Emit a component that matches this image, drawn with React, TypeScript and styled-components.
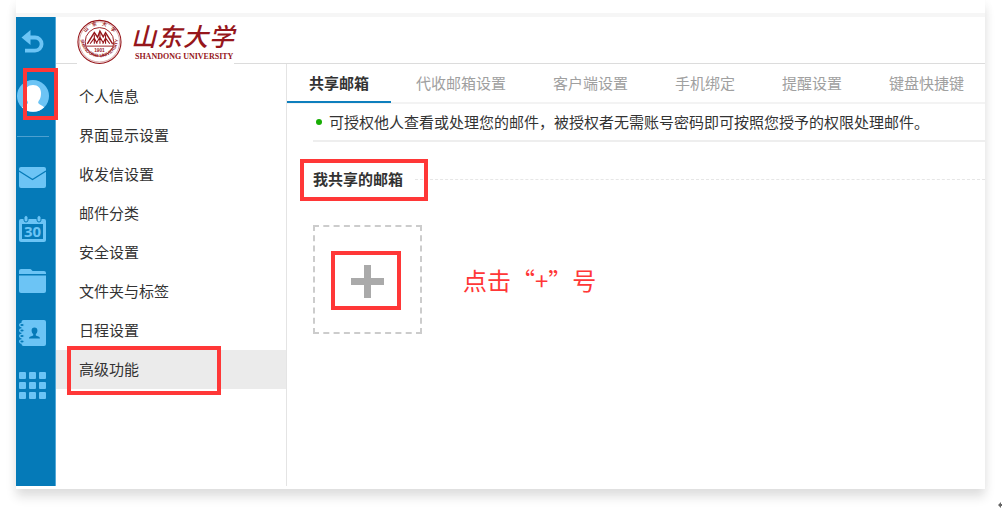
import React from "react";
import styled, { createGlobalStyle } from "styled-components";

const BLUE = "#057ab8";
const SKY = "#6cc4f5";
const RED = "#ff3737";
const MAROON = "#96161b";

const GlobalStyle = createGlobalStyle`
  *, *::before, *::after { box-sizing: border-box; }
  body {
    margin: 0;
    background: #fff;
    color: #333;
    font: 15px/20px "Noto Sans CJK SC", "Noto Sans", sans-serif;
  }
  button { padding: 0; border: 0; background: none; font: inherit; color: inherit; cursor: pointer; }
  ul, p, h2 { margin: 0; padding: 0; list-style: none; }
  svg { display: block; }
`;

const Page = styled.div`
  display: flex;
  flex-direction: column;
  min-height: 100vh;
`;

const Card = styled.div`
  flex: 1;
  display: flex;
  flex-direction: column;
  margin: 0 17px 0 16px;
  padding: 13px 0 3px;
  background: #fff;
  box-shadow: 0 8px 10px rgba(0, 0, 0, 0.12), 0 0 12px rgba(0, 0, 0, 0.03);
`;

const Strip = styled.div`
  height: 4px;
  background: #f6f6f6;
`;

const Shell = styled.div`
  flex: 1;
  display: flex;
`;

const Rail = styled.nav`
  display: flex;
  flex-direction: column;
  flex: none;
  width: 40px;
  padding-right: 6px;
  background: ${BLUE};
  border-right: 1px solid #55a9d8;
`;

const RailButton = styled.button<{ $height?: number }>`
  display: flex;
  align-items: center;
  justify-content: center;
  height: ${(p) => p.$height ?? 52}px;
`;

const RailDivider = styled.hr`
  width: 32px;
  margin: 8px 0 14px 1px;
  border: 0;
  border-top: 1px solid #4da0d0;
`;

const Avatar = styled.span`
  position: relative;
  display: block;
`;

const Marker = styled.span<{ $inset: string }>`
  position: absolute;
  z-index: 1;
  inset: ${(p) => p.$inset};
  border: 4px solid ${RED};
  pointer-events: none;
`;

const Workspace = styled.div`
  flex: 1;
  min-width: 0;
  display: flex;
  flex-direction: column;
`;

const Header = styled.header`
  height: 47px;
  padding-left: 21px;
  border-bottom: 1px solid #dcdcdc;
`;

const Brand = styled.a`
  display: flex;
  align-items: center;
  gap: 9px;
  width: 157px;
  height: 47px;
  background: #fff;
  color: ${MAROON};
  text-decoration: none;
`;

const BrandNames = styled.span`
  display: flex;
  flex-direction: column;
`;

const BrandChinese = styled.span`
  display: flex;
  gap: 1px;
  font-size: 25px;
  line-height: 33px;
  font-style: italic;
  font-weight: 500;
`;

const BrandLatin = styled.span`
  padding-left: 4px;
  font: 8px/10px "Liberation Serif", serif;
  font-weight: 700;
  white-space: nowrap;
`;

const Columns = styled.div`
  flex: 1;
  display: flex;
`;

const Menu = styled.ul`
  flex: none;
  width: 231px;
  && { padding-top: 13px; }
  border-right: 1px solid #e4e4e4;
`;

const MenuItem = styled.li`
  position: relative;
`;

const MenuLink = styled.a<{ $active?: boolean }>`
  display: flex;
  align-items: center;
  height: 39px;
  padding: 0 23px 1px;
  background: ${(p) => (p.$active ? "#ebebeb" : "transparent")};
  color: #333;
  text-decoration: none;
`;

const Content = styled.main`
  flex: 1;
  min-width: 0;
`;

const Tabs = styled.div`
  display: flex;
  gap: 3px;
  height: 40px;
  border-bottom: 2px solid #f3f3f3;
`;

const Tab = styled.button<{ $active?: boolean }>`
  height: 39px;
  padding: 0 22px;
  border-bottom: 2px solid ${(p) => (p.$active ? "#0e7fbd" : "transparent")};
  color: ${(p) => (p.$active ? "#333" : "#a0a0a0")};
  font-weight: ${(p) => (p.$active ? 700 : 400)};
  white-space: nowrap;
`;

const Panel = styled.div`
  padding-left: 26px;
`;

const Notice = styled.p`
  display: flex;
  align-items: center;
  gap: 7px;
  height: 38px;
  && { padding-left: 3px; }
  border-bottom: 2px solid #eee;

  &::before {
    content: "";
    flex: none;
    width: 6px;
    height: 6px;
    border-radius: 50%;
    background: #18ad04;
  }
`;

const SectionHead = styled.div`
  display: flex;
  align-items: center;
  gap: 12px;
  height: 74px;

  &::after {
    content: "";
    flex: 1;
    border-top: 1px dashed #e6e6e6;
  }
`;

const SectionTitle = styled.h2`
  position: relative;
  font-size: 15px;
  line-height: 20px;
`;

const ShareRow = styled.div`
  display: flex;
  align-items: center;
  gap: 41px;
  margin-top: 9px;
`;

const AddButton = styled.button`
  position: relative;
  display: flex;
  align-items: center;
  justify-content: center;
  width: 109px;
  height: 109px;
  && { padding-top: 4px; }
  border: 2px dashed #ccc;
`;

const Hint = styled.p`
  color: ${RED};
  font-size: 24px;
  line-height: 32px;
`;

const Footer = styled.footer`
  display: flex;
  justify-content: flex-end;
  align-items: flex-end;
  height: 20px;
`;

const BackIcon = () => (
  <svg width="23" height="24" viewBox="0 0 23 24" fill="none">
    <path d="M0.500 8.500L9.500 1v15z" fill={SKY} />
    <path d="M8 8.500h6a6.600 6.600 0 0 1 0 13.200H4" stroke={SKY} strokeWidth="3.800" />
  </svg>
);

const AvatarIcon = () => (
  <svg width="33" height="32" viewBox="0 0 33 32">
    <circle cx="17" cy="16" r="16" fill={SKY} />
    <path
      d="M17 5c5 0 8 3.200 8 8 0 2.600-.4 4.500-1.200 6.200-.6 1.300-1.800 2.200-1.600 3.500.3 1.700 3.400 2.300 6 4.500A16 16 0 0 1 6 27.500c2.400-2.200 5.600-3 5.900-4.800.2-1.300-1-2.200-1.700-3.500C9.400 17.500 9 15.600 9 13c0-4.800 3-8 8-8z"
      fill="#fff"
    />
  </svg>
);

const MailIcon = () => (
  <svg width="27" height="21" viewBox="0 0 27 21">
    <rect width="27" height="21" rx="2" fill={SKY} />
    <path d="M0 4l13.500 8.500L27 4" fill="none" stroke={BLUE} strokeWidth="1.200" />
  </svg>
);

const CalendarIcon = () => (
  <svg width="27" height="28" viewBox="0 0 27 28">
    <rect y="4" width="27" height="23" rx="2" fill={SKY} />
    <rect x="3" y="9" width="21" height="15" fill={BLUE} />
    {[5, 18].map((x) => (
      <rect key={x} x={x} y="0.500" width="4" height="6.500" rx="2" fill={SKY} stroke={BLUE} />
    ))}
    <text
      x="13.500"
      y="22"
      textAnchor="middle"
      fontFamily="Open Sans, sans-serif"
      fontSize="15"
      fontWeight="700"
      fill={SKY}
    >
      30
    </text>
  </svg>
);

const FolderIcon = () => (
  <svg width="27" height="25" viewBox="0 0 27 25" fill={SKY}>
    <path d="M0 5V2a2 2 0 0 1 2-2h9c1.500 0 1.800 2 3 2h11a2 2 0 0 1 2 2v1z" />
    <path d="M0 6.500h27V22a2 2 0 0 1-2 2H2a2 2 0 0 1-2-2z" />
  </svg>
);

const ContactsIcon = () => (
  <svg width="27" height="26" viewBox="0 0 27 26">
    <rect x="2.500" width="24.500" height="26" rx="2" fill={SKY} />
    {[5, 10.5, 16, 21.5].map((y) => (
      <ellipse key={y} cx="3" cy={y} rx="2.300" ry="1.700" fill={BLUE} stroke={SKY} strokeWidth="1.300" />
    ))}
    <path
      d="M15.500 7.500c1.900 0 2.900 1.300 2.900 3.100 0 1.700-.8 2.800-1.600 3.500v1.300c1.400.7 4.200.9 4.200 3.100H10c0-2.200 2.800-2.400 4.200-3.100v-1.300c-.8-.7-1.600-1.800-1.600-3.500 0-1.800 1-3.100 2.900-3.100z"
      fill={BLUE}
    />
  </svg>
);

const AppsIcon = () => (
  <svg width="27" height="27" viewBox="0 0 27 27" fill={SKY}>
    {[0, 10, 20].map((y) =>
      [0, 10, 20].map((x) => <rect key={`${x}-${y}`} x={x} y={y} width="7" height="7" rx="1" />)
    )}
  </svg>
);

const Seal = () => (
  <svg width="48" height="47" viewBox="0 0 48 47" fill="none" stroke={MAROON}>
    <circle cx="24" cy="25" r="23" strokeWidth="1.200" />
    <circle cx="24" cy="25" r="21.500" strokeWidth="0.400" />
    <circle cx="24" cy="25" r="15.300" strokeWidth="1" />
    <path d="M11 27L18.500 15l3.500 5L24.500 13.500l3.500 6L30.500 15 38 27" strokeWidth="1.500" />
    <path
      d="M14 27l4.500-6 3 6M21 26l3.500-6 3.500 6M27.500 27l3-6L35 27M18.500 17v10M24.500 15v12M30.500 17v10"
      strokeWidth="1.200"
    />
    <path d="M10 29.500h28" strokeWidth="1" />
    <path id="sealBottom" d="M4 24A20.200 20.200 0 0 0 44 24" stroke="none" />
    <path id="sealTop" d="M6.500 21A18 18 0 0 1 41.500 21" stroke="none" />
    <g fill={MAROON} stroke="none" fontWeight="700">
      <text x="24" y="36" textAnchor="middle" fontFamily="Liberation Sans, sans-serif" fontSize="5">
        1901
      </text>
      <text fontFamily="Liberation Sans, sans-serif" fontSize="5">
        <textPath href="#sealBottom" startOffset="50%" textAnchor="middle">
          SHANDONG UNIVERSITY
        </textPath>
      </text>
      <text fontFamily="Noto Sans CJK SC, sans-serif" fontSize="5">
        <textPath href="#sealTop" startOffset="50%" textAnchor="middle">
          山　东　大　学
        </textPath>
      </text>
    </g>
  </svg>
);

const PlusIcon = () => (
  <svg width="33" height="33" viewBox="0 0 33 33">
    <path d="M16.500 0v33M0 16.500h33" stroke="#aaa" strokeWidth="7" />
  </svg>
);

const ReturnMark = () => (
  <svg width="4" height="8" viewBox="0 0 4 8">
    <path d="M0 4l3-3v2h1v2H3v2z" fill="#666" />
  </svg>
);

const apps = [
  { label: "邮件", Icon: MailIcon },
  { label: "日历", Icon: CalendarIcon },
  { label: "文件", Icon: FolderIcon },
  { label: "通讯录", Icon: ContactsIcon },
  { label: "更多应用", Icon: AppsIcon },
];

const menu = ["个人信息", "界面显示设置", "收发信设置", "邮件分类", "安全设置", "文件夹与标签", "日程设置", "高级功能"];
const activeMenu = "高级功能";

const tabs = ["共享邮箱", "代收邮箱设置", "客户端设置", "手机绑定", "提醒设置", "键盘快捷键"];
const activeTab = "共享邮箱";

export default function App() {
  return (
    <Page lang="zh-CN">
      <GlobalStyle />
      <Card>
        <Strip />
        <Shell>
          <Rail>
            <RailButton $height={47} aria-label="返回">
              <BackIcon />
            </RailButton>
            <RailButton $height={64} aria-label="个人资料">
              <Avatar>
                <AvatarIcon />
                <Marker $inset="-12px -9px -8px 7px" />
              </Avatar>
            </RailButton>
            <RailDivider />
            {apps.map(({ label, Icon }) => (
              <RailButton key={label} aria-label={label}>
                <Icon />
              </RailButton>
            ))}
          </Rail>
          <Workspace>
            <Header>
              <Brand href="#home">
                <Seal />
                <BrandNames>
                  <BrandChinese>
                    {["山", "东", "大", "学"].map((c) => (
                      <span key={c}>{c}</span>
                    ))}
                  </BrandChinese>
                  <BrandLatin>SHANDONG UNIVERSITY</BrandLatin>
                </BrandNames>
              </Brand>
            </Header>
            <Columns>
              <Menu>
                {menu.map((name) => (
                  <MenuItem key={name}>
                    <MenuLink href="#settings" $active={name === activeMenu}>
                      {name}
                    </MenuLink>
                    {name === activeMenu && <Marker $inset="-4px 65px -6px 11px" />}
                  </MenuItem>
                ))}
              </Menu>
              <Content>
                <Tabs role="tablist">
                  {tabs.map((name) => (
                    <Tab key={name} role="tab" aria-selected={name === activeTab} $active={name === activeTab}>
                      {name}
                    </Tab>
                  ))}
                </Tabs>
                <Panel>
                  <Notice>可授权他人查看或处理您的邮件，被授权者无需账号密码即可按照您授予的权限处理邮件。</Notice>
                  <SectionHead>
                    <SectionTitle>
                      我共享的邮箱
                      <Marker $inset="-10px -25px -12px -13px" />
                    </SectionTitle>
                  </SectionHead>
                  <ShareRow>
                    <AddButton aria-label="添加共享邮箱">
                      <PlusIcon />
                      <Marker $inset="24px 19px 22px 16px" />
                    </AddButton>
                    <Hint>点击“+”号</Hint>
                  </ShareRow>
                </Panel>
              </Content>
            </Columns>
          </Workspace>
        </Shell>
      </Card>
      <Footer>
        <ReturnMark />
      </Footer>
    </Page>
  );
}
